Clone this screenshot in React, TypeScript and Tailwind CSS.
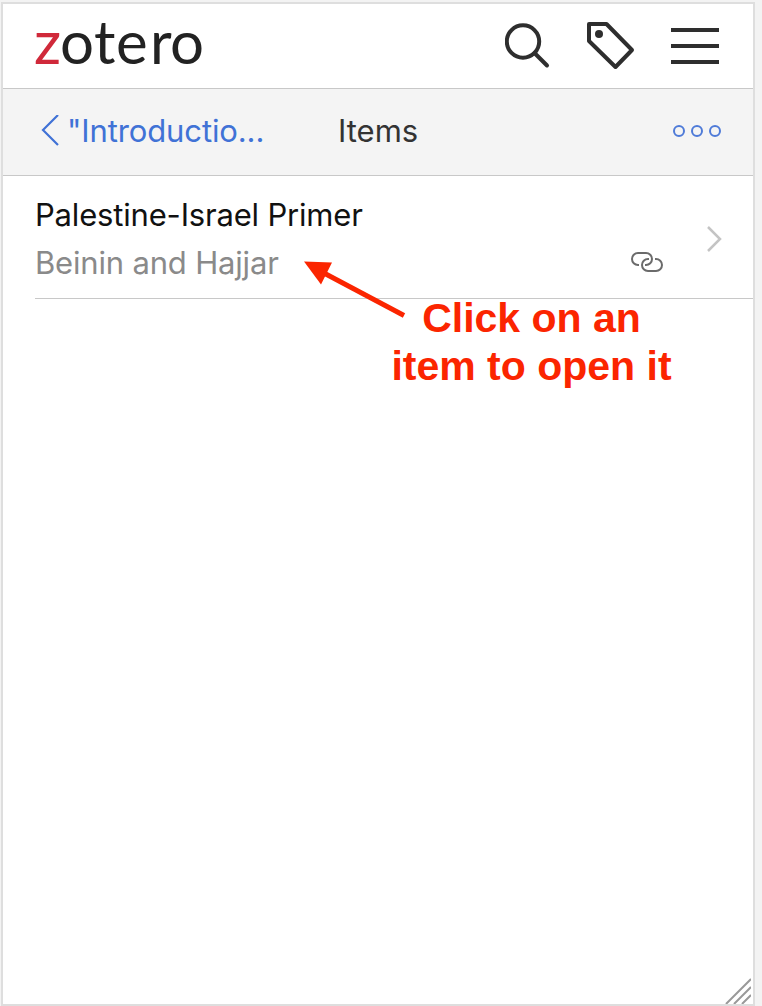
const SearchIcon = () => (
  <svg width="46" height="46" viewBox="0 0 46 46" fill="none" stroke="#2e2e2e" strokeWidth="4">
    <circle cx="18" cy="18.5" r="16.2" />
    <path d="M29.5 30 42 42.5" strokeLinecap="round" />
  </svg>
);

const TagIcon = () => (
  <svg width="48" height="48" viewBox="0 0 48 48" fill="none">
    <path d="M2 2h17.5L45 28 28.5 45 2 19Z" stroke="#2e2e2e" strokeWidth="4" strokeLinejoin="round" />
    <circle cx="12" cy="12" r="4" fill="#2e2e2e" />
  </svg>
);

const MenuIcon = () => (
  <svg width="48" height="36" viewBox="0 0 48 36" fill="#2e2e2e">
    <rect width="48" height="4" />
    <rect y="16" width="48" height="4" />
    <rect y="32" width="48" height="4" />
  </svg>
);

const LinkIcon = () => (
  <svg width="32" height="20" viewBox="0 0 32 20" fill="none" stroke="#6b6b6b" strokeWidth="2">
    <path d="M8 13H7A6 6 0 0 1 7 1H15A6 6 0 0 1 15 13H14" />
    <path d="M24 7H25A6 6 0 0 1 25 19H17A6 6 0 0 1 17 7H18" />
  </svg>
);

export default function App() {
  return (
    <div className="h-[1006px] w-[762px] overflow-hidden bg-[#f3f3f3] pl-px pt-0.5 font-['Inter',sans-serif]">
      <div className="relative flex h-[1004px] w-[754px] flex-col border-2 border-[#dedede] bg-white">
        <header className="flex h-[85px] shrink-0 items-start border-b border-[#c8c8c8] pl-[31px]">
          <div className="mt-px flex w-[200px] font-['Lato',sans-serif] text-[60px] leading-[72px] text-[#222]">
            <span className="w-[26px] text-[#d0293a]">z</span>
            <span className="w-[34px]">o</span>
            <span className="w-[22px]">t</span>
            <span className="w-[34px]">e</span>
            <span className="w-[20px]">r</span>
            <span>o</span>
          </div>
          <div className="ml-auto flex pr-[34px]">
            <div className="mt-[19px] mr-[36px]"><SearchIcon /></div>
            <div className="mt-[18px] mr-[36px]"><TagIcon /></div>
            <div className="mt-[24px]"><MenuIcon /></div>
          </div>
        </header>
        <nav className="flex h-[87px] shrink-0 items-center border-b border-[#c8c8c8] bg-[#f4f4f4] pb-[2px] pl-[38px] pr-[32px] text-[31px]">
          <a className="flex w-[297px] items-center text-[#4072d6]">
            <svg className="mr-[8px]" width="18" height="32" viewBox="0 0 18 32" fill="none" stroke="currentColor" strokeWidth="2.2">
              <path d="M17 0 2 15l15 15" />
            </svg>
            <span className="whitespace-nowrap tracking-[-0.12px]">"Introductio...</span>
          </a>
          <h1 className="text-[#333]">Items</h1>
          <svg className="mb-px ml-auto" width="48" height="12" viewBox="0 0 48 12" fill="none" stroke="#4f7bd8" strokeWidth="2">
            <circle cx="6" cy="6" r="5" />
            <circle cx="24" cy="6" r="5" />
            <circle cx="42" cy="6" r="5" />
          </svg>
        </nav>
        <main className="pl-[32px]">
          <div className="flex h-[123px] border-b border-[#c8c8c8] pt-[15px]">
            <div className="w-[596px] text-[31px] leading-[48px] tracking-[-0.18px]">
              <div className="text-[#111]">Palestine-Israel Primer</div>
              <div className="text-[#8a8a8a]">Beinin and Hajjar</div>
            </div>
            <div className="mt-[61px]"><LinkIcon /></div>
            <svg className="ml-[43px] mt-[35px]" width="17" height="26" viewBox="0 0 17 26" fill="none" stroke="#c4c4c4" strokeWidth="2.5">
              <path d="M2 1 14 13 2 25" />
            </svg>
          </div>
        </main>
        <svg className="absolute left-[301px] top-[256px]" width="104" height="60" viewBox="0 0 104 60">
          <path d="M18 12 100 55.5" stroke="#fb2500" strokeWidth="5" />
          <path d="M0 1.5 28 2.5 17 24.5Z" fill="#fb2500" />
        </svg>
        <div className="absolute left-[377.5px] top-[290px] w-[302px] whitespace-nowrap text-center font-['Liberation_Sans',Arial,sans-serif] text-[41px] font-bold leading-[48px] text-[#fb2500]">
          Click on an<br />item to open it
        </div>
        <svg className="absolute bottom-0 right-[2px]" width="26" height="27" viewBox="0 0 26 27" stroke="#999" strokeWidth="2">
          <path d="M1 27 26 2M9 27 26 10M17 27 26 18" />
        </svg>
      </div>
    </div>
  );
}
